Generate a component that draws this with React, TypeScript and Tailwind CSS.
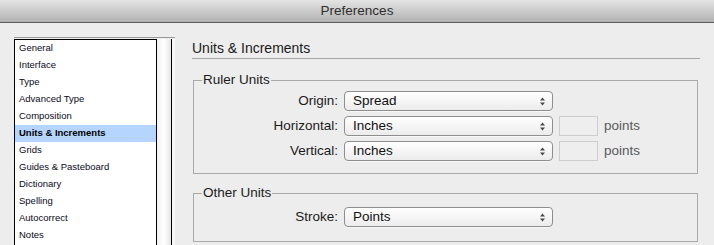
import type { ReactNode } from 'react';

const ITEMS = [
  'General',
  'Interface',
  'Type',
  'Advanced Type',
  'Composition',
  'Units & Increments',
  'Grids',
  'Guides & Pasteboard',
  'Dictionary',
  'Spelling',
  'Autocorrect',
  'Notes',
];

function Select({ value }: { value: string }) {
  return (
    <div className="relative flex h-[20px] w-[209px] items-center rounded-[4px] border border-[#8e8e8e] bg-gradient-to-b from-white to-[#ececec] pl-[8px] text-[13.5px] text-[#111] shadow-[0_1px_0_rgba(255,255,255,0.6)]">
      {value}
      <svg className="absolute right-[6px] top-[5px]" width="7" height="9" viewBox="0 0 7 9">
        <path d="M3.5 0.5 L6 3.5 L1 3.5 Z" fill="#4a4a4a" />
        <path d="M3.5 8.5 L6 5.5 L1 5.5 Z" fill="#4a4a4a" />
      </svg>
    </div>
  );
}

function Row({ label, value, points }: { label: string; value: string; points?: boolean }) {
  return (
    <div className="flex h-[20px] items-center">
      <div className="w-[144px] text-right text-[13.5px] text-[#1a1a1a]">{label}</div>
      <div className="ml-[6px]">
        <Select value={value} />
      </div>
      {points && (
        <>
          <div className="ml-[6px] h-[20px] w-[39px] border border-[#cdcdcd] bg-[#eeeeee]" />
          <span className="ml-[6px] text-[13.5px] text-[#5a5a5a]">points</span>
        </>
      )}
    </div>
  );
}

function Group({ title, children, className }: { title: string; children: ReactNode; className: string }) {
  return (
    <fieldset className={`border border-[#a9a9a9] ${className}`}>
      <legend className="ml-[8px] px-[1px] text-[13.5px] leading-[16px] text-[#1a1a1a]">{title}</legend>
      {children}
    </fieldset>
  );
}

export default function App() {
  return (
    <div
      className="h-[245px] w-[714px] overflow-hidden bg-[#ededed]"
      style={{ fontFamily: '"Liberation Sans", Arial, sans-serif' }}
    >
      <div className="flex h-[23px] items-center justify-center border-b border-[#5c5c5c] bg-gradient-to-b from-[#e4e4e4] to-[#b2b2b2] text-[13.5px] text-[#2e2e2e]">
        Preferences
      </div>
      <div className="flex">
        <div className="ml-[14px] mt-[14px] flex h-[240px] w-[161px] border-t border-[#9a9a9a]">
          <div className="mt-[1px] flex h-[240px]">
            <div className="w-[142px] border-l border-t border-black bg-white">
              {ITEMS.map((item) => (
                <div
                  key={item}
                  className={`flex h-[17px] items-center pl-[4px] text-[9.5px] ${
                    item === 'Units & Increments' ? 'bg-[#b5d5ff] font-bold text-black' : 'text-[#0a0a1a]'
                  }`}
                >
                  {item}
                </div>
              ))}
            </div>
            <div className="w-[16px] border-l border-r border-black bg-gradient-to-r from-[#f2f2f2] via-white to-[#e6e6e6]" />
          </div>
          <div className="mt-[1px] w-[3px] bg-[#f7f7f7]" />
        </div>
        <div className="ml-[17px] mr-[14px] flex-1 pt-[17px]">
          <div className="border-b border-[#a6a6a6] pb-[1px] text-[14px] leading-[17px] text-[#1a1a1a]">
            Units &amp; Increments
          </div>
          <Group title="Ruler Units" className="mt-[13px] mr-[2px] ml-[1px] px-0 pb-[12px] pt-[3px]">
            <div className="flex flex-col gap-[5px]">
              <Row label="Origin:" value="Spread" />
              <Row label="Horizontal:" value="Inches" points />
              <Row label="Vertical:" value="Inches" points />
            </div>
          </Group>
          <Group title="Other Units" className="mt-[11px] mr-[2px] ml-[1px] px-0 pb-[14px] pt-[6px]">
            <Row label="Stroke:" value="Points" />
          </Group>
        </div>
      </div>
    </div>
  );
}
